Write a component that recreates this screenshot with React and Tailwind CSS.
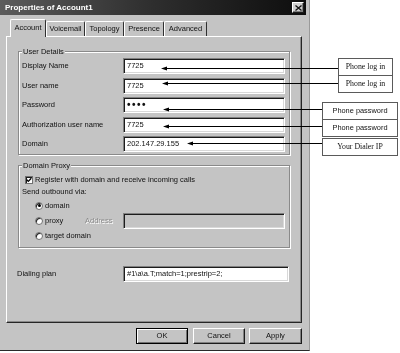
import React from 'react';

const sunken =
  'border border-t-[#808080] border-l-[#808080] border-r-white border-b-white shadow-[inset_1px_1px_0_#1c1c1c,inset_-1px_-1px_0_#d8d8d8]';
const raised =
  'border border-t-white border-l-white border-r-[#1c1c1c] border-b-[#1c1c1c] shadow-[inset_-1px_-1px_0_#808080]';
const etched = 'border border-[#8a8a8a] shadow-[1px_1px_0_#fff,inset_1px_1px_0_#fff]';

const tabs = [
  { label: 'Account', w: 'w-[36px]' },
  { label: 'Voicemail', w: 'w-[39px]' },
  { label: 'Topology', w: 'w-[39px]' },
  { label: 'Presence', w: 'w-[40px]' },
  { label: 'Advanced', w: 'w-[43px]' },
];

const details = [
  { label: 'Display Name', value: '7725' },
  { label: 'User name', value: '7725' },
  { label: 'Password', value: 'dots' },
  { label: 'Authorization user name', value: '7725' },
  { label: 'Domain', value: '202.147.29.155' },
];

const Field = ({ label, value }) => (
  <div className="flex items-center h-[16px]">
    <span className="w-[101px]">{label}</span>
    <div className={`w-[162px] h-[16px] bg-white flex items-center pl-[3px] ${sunken}`}>
      {value === 'dots' ? (
        <span className="text-[10px] font-bold leading-none tracking-[1.5px]">••••</span>
      ) : (
        value
      )}
    </div>
  </div>
);

const Radio = ({ checked }) => (
  <span className="w-[8px] h-[8px] rounded-full bg-white border border-[#707070] shadow-[inset_1px_1px_0_#1c1c1c] flex items-center justify-center">
    {checked && <span className="w-[3px] h-[3px] rounded-full bg-black" />}
  </span>
);

const Button = ({ label, w, isDefault }) => (
  <div
    className={`${w} h-[16px] flex items-center justify-center ${
      isDefault
        ? 'border border-black shadow-[inset_1px_1px_0_#fff,inset_-1px_-1px_0_#707070]'
        : raised
    }`}
  >
    {label}
  </div>
);

const Callout = ({ items, className, serif }) => (
  <div className={`absolute flex flex-col border border-[#5a5a5a] bg-white ${className}`}>
    {items.map((t, i) => (
      <div
        key={i}
        className={`h-[16px] flex items-center justify-center text-[#111] ${
          i > 0 ? 'border-t border-[#5a5a5a] h-[17px]' : ''
        } ${serif ? "font-['Liberation_Serif',serif] text-[7.8px]" : 'text-[7.4px]'}`}
      >
        {t}
      </div>
    ))}
  </div>
);

export default function App() {
  return (
    <div className="relative w-[400px] h-[353px] bg-white overflow-hidden grayscale font-['Liberation_Sans',Arial,sans-serif] text-[7.5px] text-[#111]">
      <div className="w-[310px] h-[351px] bg-[#c4c4c4] border-r border-b border-r-[#9a9a9a] border-b-[#2a2a2a] flex flex-col">
        {/* title bar */}
        <div className="h-[15px] mr-[3px] flex items-center justify-between pl-[5px] pr-[2px] bg-linear-to-r from-[#5c5c5c] via-[#2e2e2e] to-[#0e0e0e]">
          <span className="text-white font-bold text-[8px]">Properties of Account1</span>
          <div className={`w-[12px] h-[11px] bg-[#cfcfcf] flex items-center justify-center ${raised}`}>
            <svg width="7" height="6" viewBox="0 0 7 6">
              <path d="M0.5 0.5 L6.5 5.5 M6.5 0.5 L0.5 5.5" stroke="#111" strokeWidth="1.3" />
            </svg>
          </div>
        </div>

        {/* tabs */}
        <div className="mt-[4px] ml-[10px] flex items-start h-[17px]">
          {tabs.map((t, i) =>
            i === 0 ? (
              <div
                key={t.label}
                className={`${t.w} h-[18px] relative z-10 bg-[#c4c4c4] border-t border-l border-r border-t-white border-l-white border-r-[#303030] rounded-t-[2px] flex items-center justify-center pb-[1px]`}
              >
                {t.label}
              </div>
            ) : (
              <div
                key={t.label}
                className={`${t.w} h-[15px] mt-[2px] border-t border-l border-r border-t-white border-l-white border-r-[#303030] rounded-t-[2px] flex items-center justify-center`}
              >
                {t.label}
              </div>
            )
          )}
        </div>

        {/* panel */}
        <div className="ml-[6px] w-[296px] h-[287px] border border-t-white border-l-white border-r-[#262626] border-b-[#262626] shadow-[inset_-1px_-1px_0_#8a8a8a] flex flex-col">
          <fieldset className={`mt-[10px] ml-[11px] w-[272px] pl-[3px] pr-[4px] pt-[2px] pb-[2px] flex flex-col gap-[3.5px] ${etched}`}>
            <legend className="px-[1px] leading-[9px] bg-[#c4c4c4]">User Details</legend>
            {details.map((d) => (
              <Field key={d.label} label={d.label} value={d.value} />
            ))}
          </fieldset>

          <fieldset className={`mt-[5.5px] ml-[11px] w-[272px] pl-[3px] pr-[4px] pt-[4.5px] pb-[4px] flex flex-col ${etched}`}>
            <legend className="px-[1px] leading-[9px] bg-[#c4c4c4]">Domain Proxy</legend>
            <div className="h-[12px] flex items-center gap-[2px] ml-[3px]">
              <span className="w-[8px] h-[8px] bg-white border border-[#707070] shadow-[inset_1px_1px_0_#1c1c1c] flex items-center justify-center">
                <svg width="6" height="6" viewBox="0 0 6 6">
                  <path d="M0.8 2.8 L2.3 4.4 L5.3 1.2" stroke="#000" strokeWidth="1.3" fill="none" />
                </svg>
              </span>
              <span>Register with domain and receive incoming calls</span>
            </div>
            <div className="h-[12px] flex items-center">Send outbound via:</div>
            <div className="h-[15px] flex items-center ml-[13px] gap-[2px]">
              <Radio checked />
              <span>domain</span>
            </div>
            <div className="h-[15px] flex items-center ml-[13px]">
              <div className="w-[50px] flex items-center gap-[2px]">
                <Radio />
                <span>proxy</span>
              </div>
              <span className="w-[38px] text-[#8c8c8c] [text-shadow:1px_1px_0_#fff]">Address</span>
              <div className={`w-[162px] h-[16px] bg-[#c4c4c4] ${sunken}`} />
            </div>
            <div className="h-[15px] flex items-center ml-[13px] gap-[2px]">
              <Radio />
              <span>target domain</span>
            </div>
          </fieldset>

          <div className="mt-[18px] ml-[10px] flex items-center h-[16px]">
            <span className="w-[106px]">Dialing plan</span>
            <div className={`w-[166px] h-[16px] bg-white flex items-center pl-[3px] ${sunken}`}>
              #1\a\a.T;match=1;prestrip=2;
            </div>
          </div>
        </div>

        {/* buttons */}
        <div className="mt-[5px] ml-[136px] flex">
          <Button label="OK" w="w-[52px]" isDefault />
          <div className="ml-[5px]">
            <Button label="Cancel" w="w-[52px]" />
          </div>
          <div className="ml-[4px]">
            <Button label="Apply" w="w-[53px]" />
          </div>
        </div>
      </div>

      {/* annotation callouts */}
      <Callout items={['Phone log in', 'Phone log in']} serif className="left-[338px] top-[58px] w-[55px]" />
      <Callout items={['Phone password', 'Phone password']} className="left-[322px] top-[102px] w-[76px]" />
      <Callout items={['Your Dialer IP']} serif className="left-[322px] top-[138px] w-[76px]" />

      <svg className="absolute left-0 top-0 pointer-events-none" width="400" height="353" viewBox="0 0 400 353">
        {[
          { x: 161, y: 68.5, end: 338 },
          { x: 162, y: 83.5, end: 338 },
          { x: 163, y: 109.5, end: 322 },
          { x: 163, y: 126.5, end: 322 },
          { x: 187, y: 143.5, end: 322 },
        ].map((a, i) => (
          <g key={i}>
            <line x1={a.x + 4} y1={a.y} x2={a.end} y2={a.y} stroke="#000" strokeWidth="1" />
            <polygon points={`${a.x},${a.y} ${a.x + 6},${a.y - 2} ${a.x + 6},${a.y + 2}`} fill="#000" />
          </g>
        ))}
      </svg>
    </div>
  );
}
